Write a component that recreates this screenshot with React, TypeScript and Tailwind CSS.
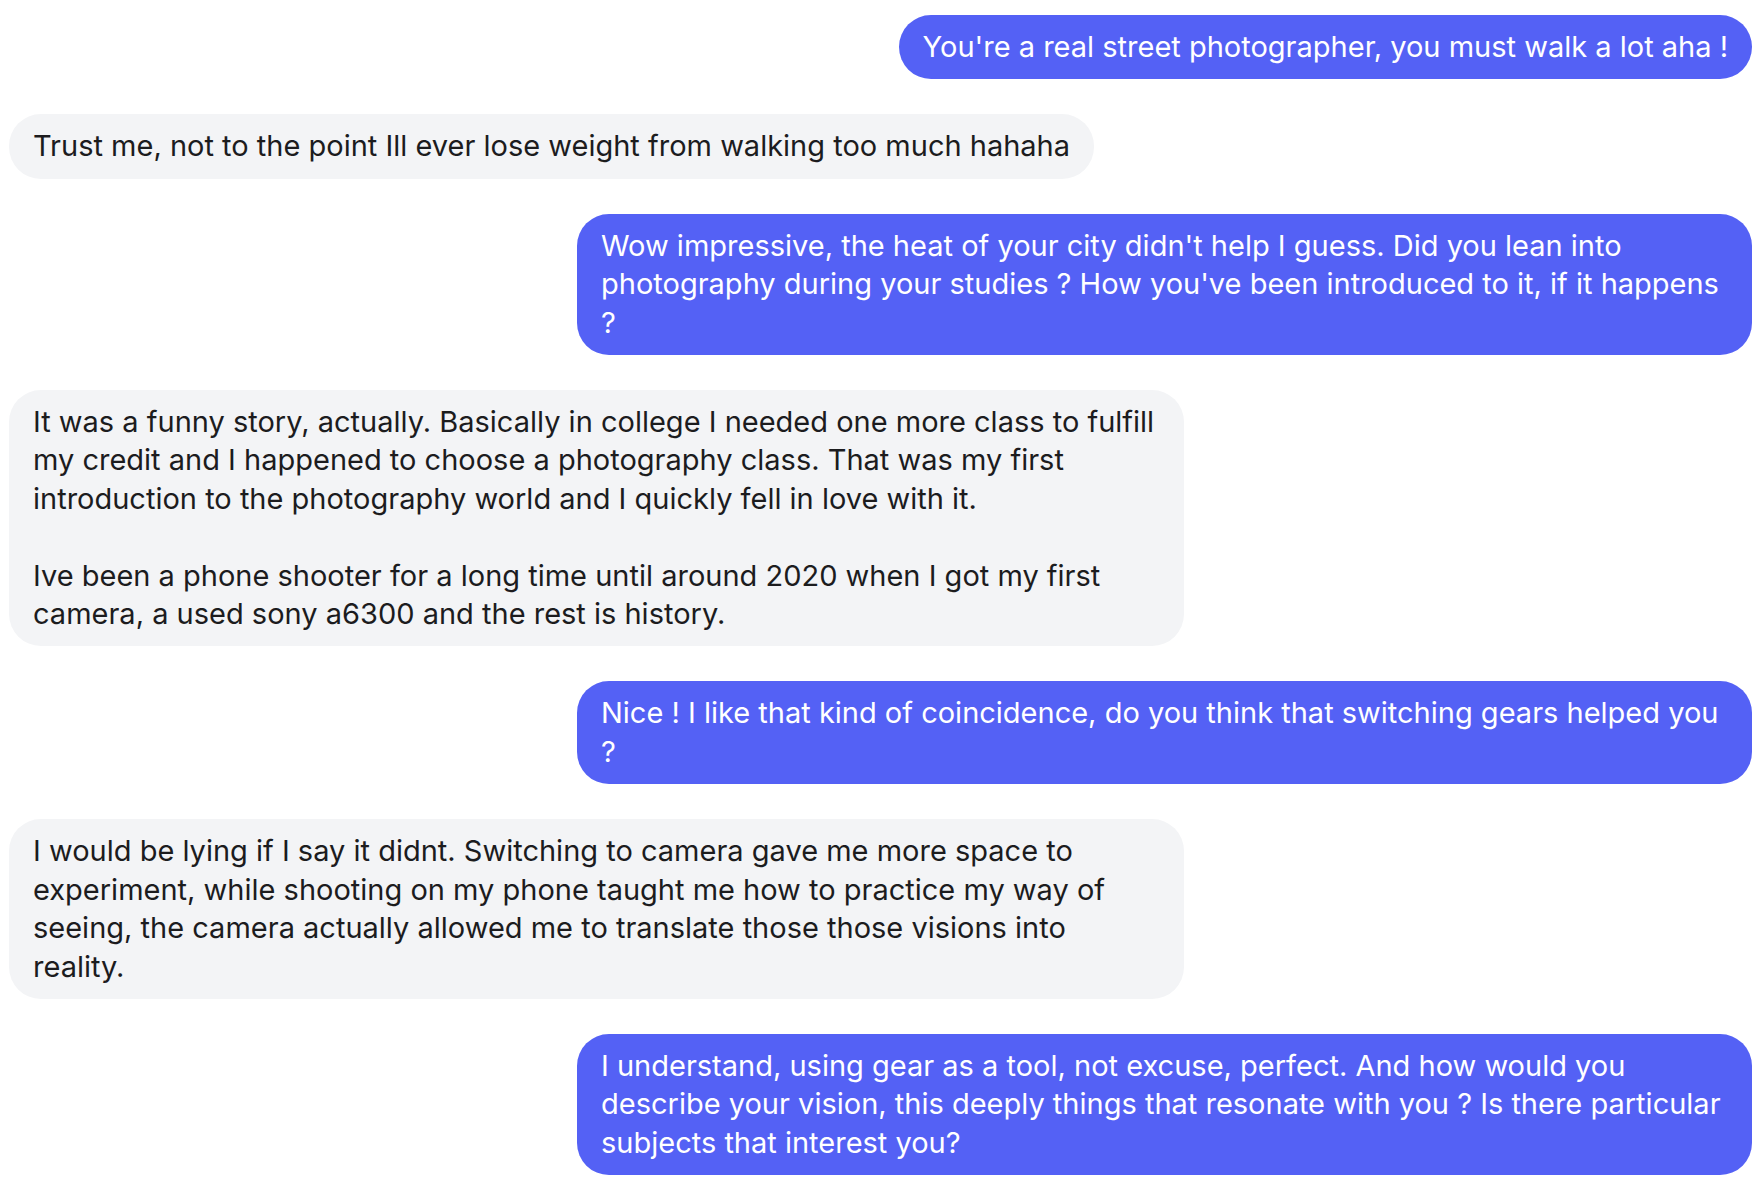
type Message = {
  id: number;
  fromMe: boolean;
  text: string;
};

const messages: Message[] = [
  { id: 1, fromMe: true, text: "You're a real street photographer, you must walk a lot aha !" },
  { id: 2, fromMe: false, text: 'Trust me, not to the point Ill ever lose weight from walking too much hahaha' },
  {
    id: 3,
    fromMe: true,
    text: "Wow impressive, the heat of your city didn't help I guess. Did you lean into photography during your studies ? How you've been introduced to it, if it happens ?",
  },
  {
    id: 4,
    fromMe: false,
    text: 'It was a funny story, actually. Basically in college I needed one more class to fulfill my credit and I happened to choose a photography class. That was my first introduction to the photography world and I quickly fell in love with it.\n\nIve been a phone shooter for a long time until around 2020 when I got my first camera, a used sony a6300 and the rest is history.',
  },
  {
    id: 5,
    fromMe: true,
    text: 'Nice ! I like that kind of coincidence, do you think that switching gears helped you ?',
  },
  {
    id: 6,
    fromMe: false,
    text: 'I would be lying if I say it didnt. Switching to camera gave me more space to experiment, while shooting on my phone taught me how to practice my way of seeing, the camera actually allowed me to translate those those visions into reality.',
  },
  {
    id: 7,
    fromMe: true,
    text: 'I understand, using gear as a tool, not excuse, perfect. And how would you describe your vision, this deeply things that resonate with you ? Is there particular subjects that interest you?',
  },
];

export default function App() {
  return (
    <div className="min-h-screen w-full bg-white font-['Inter','Noto_Sans',sans-serif]">
      <div className="flex flex-col gap-[35px] pt-[15px] pl-[9px] pr-[12px] pb-4">
        {messages.map((m) => (
          <div key={m.id} className={`flex ${m.fromMe ? 'justify-end' : 'justify-start'}`}>
            <div
              className={`max-w-[1175px] whitespace-pre-line rounded-[32px] px-6 py-[13px] text-[29px] leading-[38.4px] ${
                m.fromMe ? 'bg-[#5461f5] text-white' : 'bg-[#f3f4f6] text-[#1c1c1e]'
              }`}
            >
              {m.text}
            </div>
          </div>
        ))}
      </div>
    </div>
  );
}
